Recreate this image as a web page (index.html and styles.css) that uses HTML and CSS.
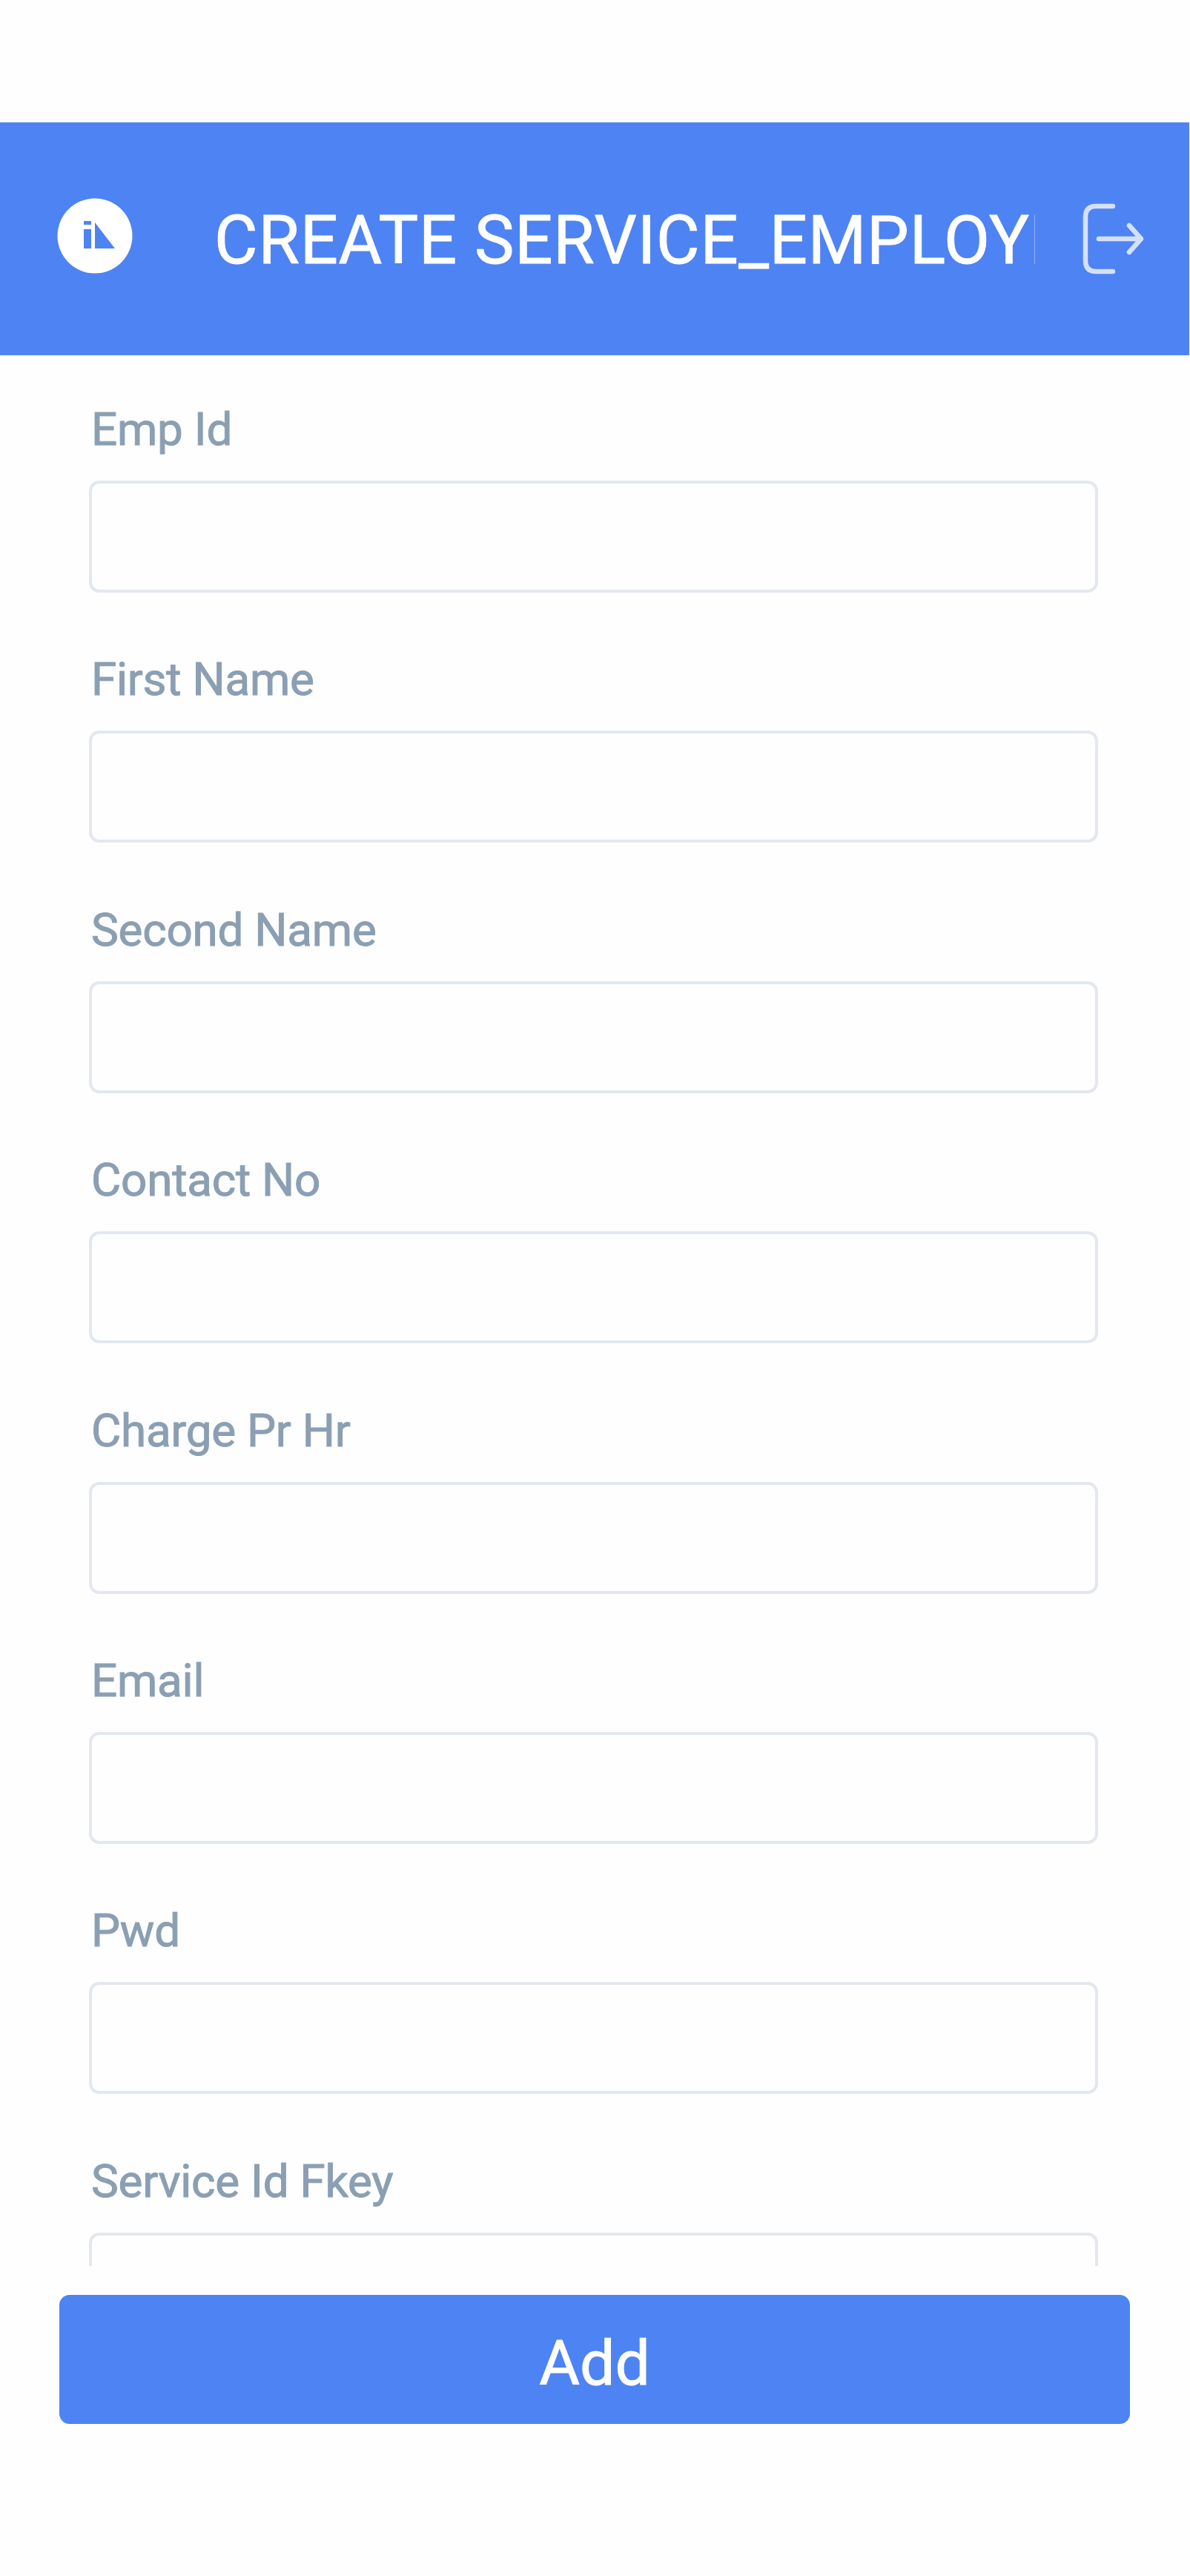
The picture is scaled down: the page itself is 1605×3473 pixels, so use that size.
FILE: index.html
```html
<!DOCTYPE html>
<html lang="en">
<head>
<meta charset="utf-8">
<title>Create Service Employee</title>
<link rel="stylesheet" href="styles.css">
</head>
<body>
<div class="screen">
  <header class="header">
    <svg class="logo" viewBox="0 0 102 102" aria-hidden="true">
      <circle cx="51" cy="51" r="50.5" fill="#fff"/>
      <path d="M36 31h10v5H36zM36 42h10v26H36zM51 33V68h27z" fill="#4e83f3"/>
    </svg>
    <h1 class="title">CREATE SERVICE_EMPLOYEE</h1>
    <svg class="logout" viewBox="0 0 84 96" aria-hidden="true">
      <path d="M41 4H18Q4 4 4 19V77Q4 92 18 92H41M22 48H79M63 30L79 48L63 66"/>
    </svg>
  </header>
  <main class="form">
    <label class="field"><span class="label">Emp Id</span><input class="input" type="text"></label>
    <label class="field"><span class="label">First Name</span><input class="input" type="text"></label>
    <label class="field"><span class="label">Second Name</span><input class="input" type="text"></label>
    <label class="field"><span class="label">Contact No</span><input class="input" type="text"></label>
    <label class="field"><span class="label">Charge Pr Hr</span><input class="input" type="text"></label>
    <label class="field"><span class="label">Email</span><input class="input" type="text"></label>
    <label class="field"><span class="label">Pwd</span><input class="input" type="text"></label>
    <label class="field"><span class="label">Service Id Fkey</span><input class="input" type="text"></label>
  </main>
  <button class="add" type="button">Add</button>
</div>
</body>
</html>
```
FILE: styles.css
```css
* { box-sizing: border-box; }
body {
  margin: 0;
  background: #fefefe;
  font-family: Roboto, "Liberation Sans", sans-serif;
}
.screen {
  display: flex;
  flex-direction: column;
  width: 1605px;
  height: 3473px;
  padding-top: 165px;
  overflow: hidden;
}
.header {
  display: flex;
  flex: none;
  align-items: center;
  width: 1604px;
  height: 314px;
  padding: 0 59px 0 77px;
  background: #4e83f3;
}
.logo {
  flex: none;
  width: 102px;
  height: 102px;
  margin: -8px 108px 0 0;
}
.title {
  flex: none;
  width: 1109px;
  margin: 6px 64px 0 0;
  padding-left: 2px;
  overflow: hidden;
  color: #fff;
  font-size: 90px;
  font-weight: 400;
  letter-spacing: 0.8px;
  line-height: 110px;
  white-space: nowrap;
  -webkit-text-stroke: 1px #fff;
}
.logout {
  flex: none;
  width: 84px;
  height: 96px;
  fill: none;
  stroke: #d5e1fc;
  stroke-width: 6.5;
  stroke-linecap: round;
  stroke-linejoin: round;
}
.form {
  flex: none;
  height: 2576px;
  padding: 59px 124px 0 120px;
  overflow: hidden;
}
.field {
  display: flex;
  flex-direction: column;
  height: 337.4px;
}
.label {
  height: 110px;
  padding-left: 3px;
  color: #8b9fb3;
  font-size: 62px;
  font-weight: 400;
  letter-spacing: -0.25px;
  line-height: 82px;
  -webkit-text-stroke: 1px #8b9fb3;
}
.input {
  width: 100%;
  height: 151px;
  border: 4px solid #e3e8ee;
  border-radius: 14px;
  background: #fefefe;
}
.add {
  flex: none;
  width: 1444px;
  height: 174px;
  margin: 39px 0 0 80px;
  padding: 12px 0 0;
  border: 0;
  border-radius: 14px;
  background: #4e83f3;
  color: #fff;
  font: 400 84px/100px Roboto, "Liberation Sans", sans-serif;
  -webkit-text-stroke: 1px #fff;
}
```
